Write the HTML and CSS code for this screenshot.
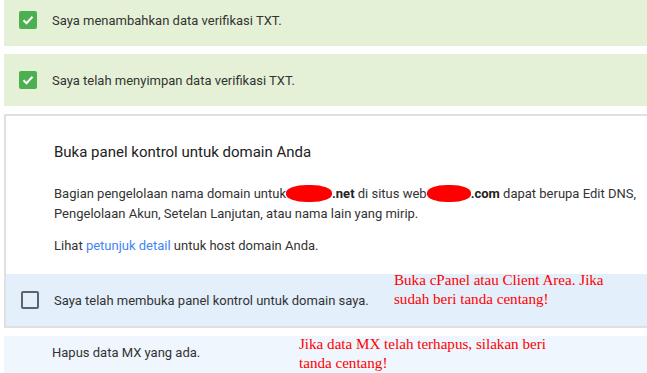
FILE: index.html
```html
<!DOCTYPE html>
<html>
<head>
    <meta charset="UTF-8">
    <title>Verifikasi domain</title>
    <link rel="stylesheet" href="styles.css">
</head>
<body>
<div class="page">
    <div class="step done first">
        <span class="check on"><svg width="12" height="10" viewBox="0 0 12 10"><path d="M1.5 5.2l3 3 6-6.5" fill="none" stroke="#fff" stroke-width="2"/></svg></span>
        <span>Saya menambahkan data verifikasi TXT.</span>
    </div>
    <div class="step done">
        <span class="check on"><svg width="12" height="10" viewBox="0 0 12 10"><path d="M1.5 5.2l3 3 6-6.5" fill="none" stroke="#fff" stroke-width="2"/></svg></span>
        <span>Saya telah menyimpan data verifikasi TXT.</span>
    </div>

    <div class="card">
        <div class="card_body">
            <h3>Buka panel kontrol untuk domain Anda</h3>
            <p>Bagian pengelolaan nama domain untuk<span class="blot b1"></span><b>.net</b> di situs web<span class="blot b2"></span><b>.com</b> dapat berupa Edit DNS, Pengelolaan Akun, Setelan Lanjutan, atau nama lain yang mirip.</p>
            <p class="hint">Lihat <a href="#">petunjuk detail</a> untuk host domain Anda.</p>
        </div>
        <div class="step open">
            <span class="check"></span>
            <span>Saya telah membuka panel kontrol untuk domain saya.</span>
        </div>
    </div>

    <div class="step next">
        <span>Hapus data MX yang ada.</span>
    </div>

    <!-- catatan merah di atas tangkapan layar -->
    <div class="note n1">Buka cPanel atau Client Area. Jika<br>sudah beri tanda centang!</div>
    <div class="note n2">Jika data MX telah terhapus, silakan beri<br>tanda centang!</div>
</div>
</body>
</html>
```

FILE: styles.css
```css
body{ margin: 0; overflow: hidden; font-family: Roboto, "Liberation Sans", sans-serif; font-size: 13px; color: #333;}
.page{ position: relative; padding-left: 4px; margin-top: -6px;}
.step{
    display: flex;
    align-items: center;
    height: 52px;
    padding-left: 15px;
}
.step.done{ background: #e5f1d7; margin-bottom: 8px;}
.check{
    width: 18px;
    height: 18px;
    box-sizing: border-box;
    border-radius: 2px;
    border: 2px solid #5f6368;
    margin-right: 15px;
    display: flex;
    align-items: center;
    justify-content: center;
}
.check.on{ background: #4caf50; border: none;}
.card{
    background: white;
    border: 2px solid #e0e0e0;
    border-right: none;
    margin-bottom: 8px;
}
.card_body{ padding: 26px 2px 18px 48px;}
.card_body h3{ margin: 0 0 22px; font-size: 15px; font-weight: 400; line-height: 20px; color: #222;}
.card_body p{ margin: 0; line-height: 20px;}
.card_body .hint{ margin-top: 12px;}
.card_body b{ font-weight: 700; color: #222;}
.card_body a{ color: #4285f4; text-decoration: none;}
.blot{
    display: inline-block;
    height: 17px;
    background: #f00;
    border-radius: 45%;
    vertical-align: -4px;
}
.b1{ width: 46px;}
.b2{ width: 44px;}
.step.open{ background: #e3effb; padding-left: 15px;}
.step.next{ background: #eff6fd; padding-left: 48px; height: 40px; align-items: flex-start; padding-top: 9px;}
.note{
    position: absolute;
    font-family: "Liberation Serif", serif;
    font-size: 15.1px;
    line-height: 19px;
    color: #f00;
}
.n1{ left: 394px; top: 277px;}
.n2{ left: 299px; top: 341px;}
```
